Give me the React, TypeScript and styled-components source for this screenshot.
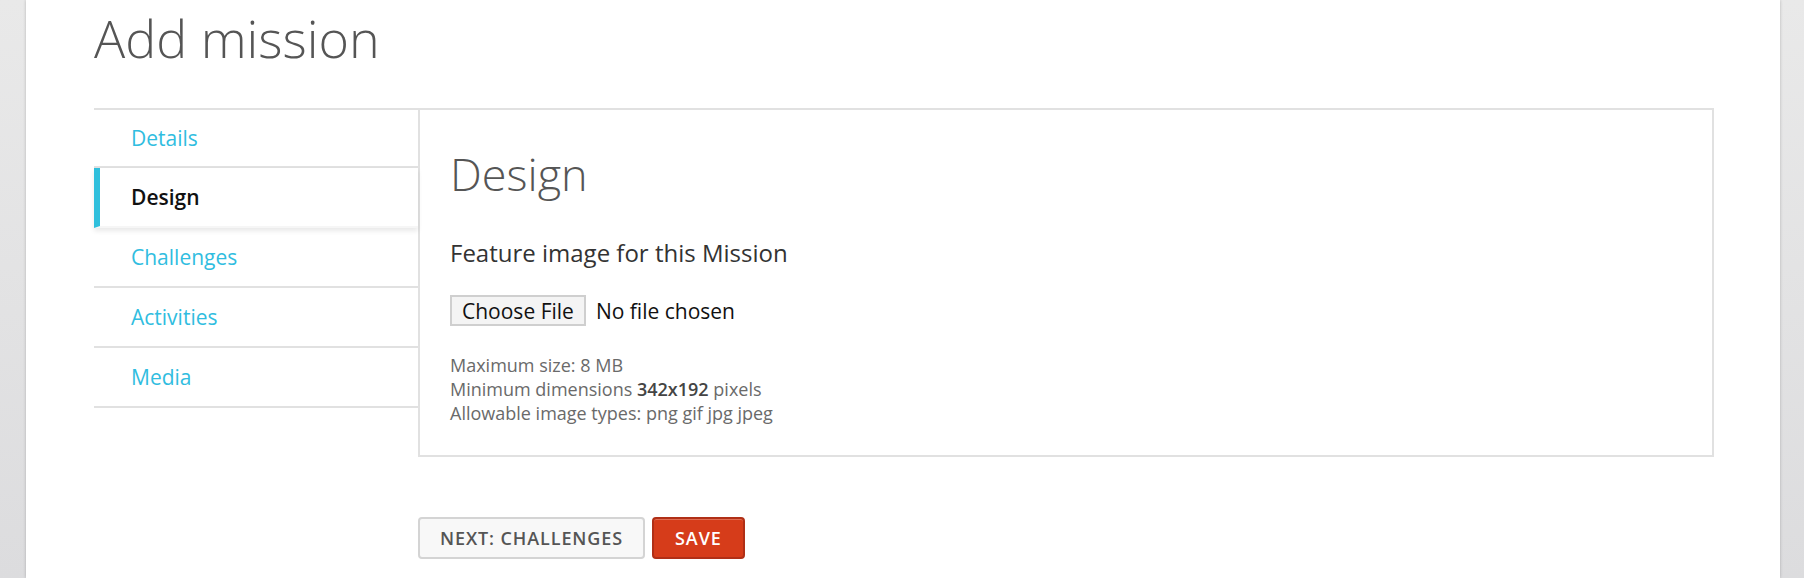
import React from 'react';
import styled, { createGlobalStyle } from 'styled-components';

const GlobalStyle = createGlobalStyle`
    html, body {
        margin: 0;
        padding: 0;
    }

    body {
        background: linear-gradient(to bottom, #e9e9e9, #dcdcde);
        font-family: 'Open Sans', 'Liberation Sans', sans-serif;
        min-height: 578px;
        overflow: hidden;
    }
`;

type NavItemType = {
    label: string;
    active?: boolean;
};

const navItems: NavItemType[] = [
    { label: 'Details' },
    { label: 'Design', active: true },
    { label: 'Challenges' },
    { label: 'Activities' },
    { label: 'Media' },
];

const Page = styled.div`
    margin-left: 26px;
    width: 1754px;
    min-height: 578px;
    background: #fff;
    box-shadow: 0 0 3px rgba(0, 0, 0, 0.22);
    padding: 2px 66px 0 68px;
    box-sizing: border-box;
`;

const Title = styled.h1`
    margin: 0 0 35px;
    font-size: 52px;
    font-weight: 300;
    line-height: normal;
    color: #555;
`;

const Layout = styled.div`
    display: flex;
    align-items: flex-start;
`;

const Sidebar = styled.ul`
    width: 324px;
    flex-shrink: 0;
    margin: 0;
    padding: 0;
    list-style: none;
    border-top: 2px solid #e1e1e1;
`;

const NavRow = styled.li<{ $active?: boolean }>`
    position: relative;
    height: 58px;
    line-height: 58px;
    font-size: 21px;
    padding-left: ${(p) => (p.$active ? '31px' : '37px')};
    border-left: ${(p) => (p.$active ? '6px solid #2fbfdc' : 'none')};
    border-bottom: 2px solid ${(p) => (p.$active ? '#f6f6f6' : '#e1e1e1')};
    color: ${(p) => (p.$active ? '#111' : '#30bde0')};
    font-weight: ${(p) => (p.$active ? 600 : 400)};
    box-shadow: ${(p) => (p.$active ? '0 3px 5px rgba(0, 0, 0, 0.09)' : 'none')};
    z-index: ${(p) => (p.$active ? 1 : 0)};
    cursor: pointer;

    &:first-child {
        height: 56px;
        line-height: 56px;
    }
`;

const Panel = styled.section`
    flex: 1;
    border: 2px solid #e1e1e1;
    padding: 33px 30px 30px;
    min-height: 349px;
    box-sizing: border-box;
`;

const PanelTitle = styled.h2`
    margin: 0 0 32px;
    font-size: 45px;
    font-weight: 300;
    line-height: normal;
    color: #555;
`;

const FieldLabel = styled.label`
    display: block;
    font-size: 24px;
    color: #333;
    line-height: normal;
    margin-bottom: 26px;
`;

const FileInput = styled.input`
    display: block;
    font-family: 'Open Sans', 'Liberation Sans', sans-serif;
    font-size: 21px;
    color: #111;
    height: 31px;
    margin: 0 0 27px;
    padding: 0;

    &::file-selector-button {
        font-family: inherit;
        font-size: 21px;
        color: #111;
        height: 31px;
        padding: 0 10px;
        margin-right: 10px;
        background: #f4f4f4;
        border: 2px solid #cfcfcf;
        border-radius: 0;
    }
`;

const Help = styled.div`
    font-size: 18px;
    line-height: 24px;
    color: #6a6a6a;

    strong {
        color: #444;
        font-weight: 600;
    }
`;

const Actions = styled.div`
    display: flex;
    gap: 7px;
    margin: 60px 0 0 324px;
`;

const Button = styled.button<{ $primary?: boolean }>`
    height: 42px;
    padding: 0 ${(p) => (p.$primary ? '21px' : '20px')};
    font-family: 'Open Sans', 'Liberation Sans', sans-serif;
    font-size: 18px;
    font-weight: 600;
    letter-spacing: 0.9px;
    text-transform: uppercase;
    border-radius: 4px;
    border: 2px solid ${(p) => (p.$primary ? '#b02f16' : '#d4d4d4')};
    background: ${(p) => (p.$primary ? '#d63c1a' : '#f8f8f8')};
    color: ${(p) => (p.$primary ? '#fff' : '#555')};
    box-shadow: ${(p) => (p.$primary ? 'inset 0 1px 0 rgba(255, 255, 255, 0.25)' : 'none')};
    cursor: pointer;
`;

export default function App() {
    return (
        <>
            <GlobalStyle />
            <Page>
                <Title>Add mission</Title>
                <Layout>
                    <Sidebar>
                        {navItems.map((item) => (
                            <NavRow key={item.label} $active={item.active}>
                                {item.label}
                            </NavRow>
                        ))}
                    </Sidebar>
                    <Panel>
                        <PanelTitle>Design</PanelTitle>
                        <FieldLabel htmlFor="feature-image">Feature image for this Mission</FieldLabel>
                        <FileInput id="feature-image" type="file" />
                        <Help>
                            Maximum size: 8 MB
                            <br />
                            Minimum dimensions <strong>342x192</strong> pixels
                            <br />
                            Allowable image types: png gif jpg jpeg
                        </Help>
                    </Panel>
                </Layout>
                <Actions>
                    <Button type="button">Next: Challenges</Button>
                    <Button type="button" $primary>
                        Save
                    </Button>
                </Actions>
            </Page>
        </>
    );
}
